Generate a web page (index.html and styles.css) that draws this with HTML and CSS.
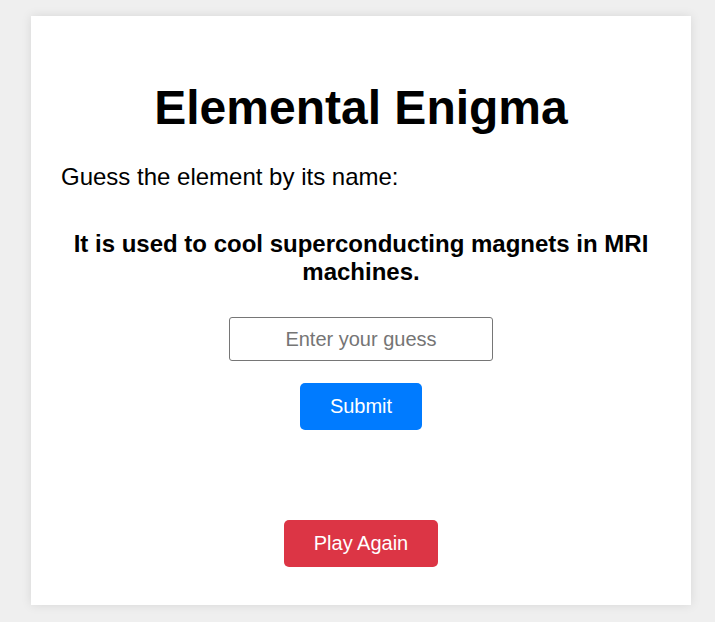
FILE: index.html
```html
<!DOCTYPE html>
<html lang="en">
<head>
<meta charset="utf-8">
<title>Elemental Enigma</title>
<link rel="stylesheet" href="styles.css">
</head>
<body>
  <main class="card">
    <h1 class="title">Elemental Enigma</h1>
    <p class="prompt">Guess the element by its name:</p>
    <p class="clue">It is used to cool superconducting magnets in MRI machines.</p>
    <div class="controls">
      <input class="guess" type="text" placeholder="Enter your guess">
      <button class="btn btn-submit" type="button">Submit</button>
    </div>
    <div class="again-row">
      <button class="btn btn-again" type="button">Play Again</button>
    </div>
  </main>
</body>
</html>
```

FILE: styles.css
```css
html, body {
  margin: 0;
  background: #efefef;
}
body {
  padding: 16px 24px 18px 31px;
  font-family: "Liberation Sans", Arial, sans-serif;
  color: #000;
}
.card {
  background: #fff;
  padding: 30px 30px 38px;
  box-shadow: 0 0 10px rgba(0, 0, 0, 0.1);
}
.title {
  font-size: 48px;
  font-weight: bold;
  text-align: center;
  margin: 34px 0 28px;
  line-height: normal;
}
.prompt {
  font-size: 24px;
  margin: 0;
  line-height: normal;
}
.clue {
  font-size: 24px;
  font-weight: bold;
  text-align: center;
  margin: 39px 0 31px;
  line-height: 28px;
}
.controls {
  display: flex;
  flex-direction: column;
  align-items: center;
  gap: 22px;
}
.guess {
  box-sizing: border-box;
  width: 264px;
  height: 44px;
  padding: 0 10px;
  border: 1px solid #767676;
  border-radius: 3px;
  font-family: "Liberation Sans", Arial, sans-serif;
  font-size: 20px;
  text-align: center;
  color: #000;
}
.guess::placeholder {
  color: #757575;
}
.btn {
  font-family: "Liberation Sans", Arial, sans-serif;
  font-size: 20px;
  line-height: 23px;
  padding: 12px 30px;
  border: none;
  border-radius: 5px;
  color: #fff;
  cursor: pointer;
}
.btn-submit {
  background: #007bff;
}
.again-row {
  display: flex;
  justify-content: center;
  margin-top: 90px;
}
.btn-again {
  background: #dc3545;
}
```
